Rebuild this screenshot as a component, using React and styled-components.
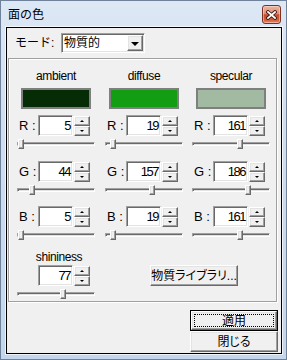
import React from "react";
import styled, { createGlobalStyle } from "styled-components";

const FONT = `"Liberation Sans", "Noto Sans CJK JP", sans-serif`;

const Global = createGlobalStyle`
  html, body { margin: 0; padding: 0; background: #ffffff; }
  body { font-family: ${FONT}; font-size: 12px; color: #000; }
  * { box-sizing: border-box; }
`;

const Window = styled.div`
  width: 287px;
  height: 360px;
  border: 1px solid #6f8299;
  background: linear-gradient(to bottom, #dde8f5 0%, #d0def0 30%, #c3d6ec 100%);
  padding: 0 4px 5px 5px;
  display: flex;
  flex-direction: column;
`;

const TitleBar = styled.div`
  height: 26px;
  flex: none;
  display: flex;
  align-items: flex-start;
  justify-content: space-between;
  padding-left: 2px;
`;

const Title = styled.div`
  margin-top: 6px;
  line-height: 14px;
  font-size: 12px;
  font-family: "Noto Sans CJK JP", sans-serif;
  color: #000;
`;

const CloseButton = styled.div`
  width: 19px;
  height: 19px;
  margin: 4px 1px 0 0;
  border: 1px solid #7b3324;
  border-radius: 3px;
  background: linear-gradient(to bottom, #ecb7a6 0%, #de8c73 45%, #c8492c 52%, #cf5a37 80%, #e0876a 100%);
  box-shadow: inset 0 0 0 1px rgba(255, 235, 225, 0.45);
  display: flex;
  align-items: center;
  justify-content: center;
`;

const Client = styled.div`
  flex: none;
  width: 276px;
  height: 327px;
  border: 1px solid #000;
  box-shadow: 0 0 0 1px rgba(255, 255, 255, 0.7);
  background: #f0f0f0;
  display: flex;
  flex-direction: column;
  align-items: flex-start;
  padding-top: 5px;
`;

const ModeRow = styled.div`
  display: flex;
  align-items: center;
  padding-left: 8px;
  height: 20px;
`;

const ModeLabel = styled.div`
  width: 46px;
  line-height: 14px;
`;

const sunken = `
  border: 1px solid;
  border-color: #a0a0a0 #ffffff #ffffff #a0a0a0;
  box-shadow: inset 1px 1px 0 #696969, inset -1px -1px 0 #e3e3e3;
`;

const raised = `
  border: 1px solid;
  border-color: #ffffff #696969 #696969 #ffffff;
  box-shadow: inset -1px -1px 0 #a0a0a0, inset 1px 1px 0 #e3e3e3;
  background: #f0f0f0;
`;

const Select = styled.div`
  width: 84px;
  height: 20px;
  ${sunken}
  background: #fff;
  display: flex;
  align-items: center;
  padding: 0 1px 0 2px;
`;

const SelectText = styled.div`
  flex: 1;
  line-height: 14px;
`;

const DropButton = styled.div`
  width: 16px;
  height: 16px;
  ${raised}
  display: flex;
  align-items: center;
  justify-content: center;
`;

const DownArrow = styled.div`
  width: 0;
  height: 0;
  border-left: 4px solid transparent;
  border-right: 4px solid transparent;
  border-top: 4px solid #000;
  margin-top: 1px;
`;

const GroupBox = styled.div`
  margin: 5px 0 0 1px;
  width: 269px;
  height: 244px;
  border: 1px solid #a0a0a0;
  box-shadow: inset 1px 1px 0 #fff, 1px 1px 0 #fff;
  padding: 10px 0 0 3px;
  display: flex;
  flex-direction: column;
`;

const Columns = styled.div`
  display: grid;
  grid-template-columns: 88px 87px 88px;
`;

const Column = styled.div`
  display: flex;
  flex-direction: column;
  align-items: flex-start;
`;

const ColumnTitle = styled.div`
  width: 88px;
  text-align: center;
  line-height: 14px;
  height: 14px;
  letter-spacing: -0.4px;
  padding-left: ${(p) => p.$shift || 0}px;
`;

const Swatch = styled.div`
  margin: 5px 0 0 9px;
  width: 70px;
  height: 21px;
  border: 2px solid #7f7f7f;
  background: ${(p) => p.$color};
`;

const Channel = styled.div`
  margin-top: ${(p) => p.$gap}px;
  display: flex;
  flex-direction: column;
  align-items: flex-start;
`;

const Row = styled.div`
  display: flex;
  align-items: center;
  height: 21px;
`;

const RowLabel = styled.div`
  width: 26px;
  padding-left: 7px;
  font-size: 13px;
  line-height: 14px;
  white-space: pre;
`;

const Edit = styled.div`
  width: 35px;
  height: 21px;
  ${sunken}
  background: #fff;
  display: flex;
  align-items: center;
  justify-content: flex-end;
  padding-right: 2px;
  font-size: 13px;
  letter-spacing: -1.5px;
  line-height: 14px;
`;

const Spin = styled.div`
  width: 17px;
  height: 21px;
  padding: 1px 0 0 1px;
  display: flex;
  flex-direction: column;
`;

const SpinButton = styled.div`
  width: 16px;
  height: 10px;
  ${raised}
  display: flex;
  align-items: center;
  justify-content: center;
`;

const TinyArrow = styled.div`
  width: 0;
  height: 0;
  border-left: 2px solid transparent;
  border-right: 2px solid transparent;
  ${(p) => (p.$up ? "border-bottom: 2px solid #000;" : "border-top: 2px solid #000;")}
`;

const SliderBox = styled.div`
  position: relative;
  width: 78px;
  height: 12px;
  margin: 1px 0 0 5px;
`;

const Track = styled.div`
  margin-top: 5px;
  height: 4px;
  border: 1px solid;
  border-color: #a0a0a0 #ffffff #ffffff #a0a0a0;
  box-shadow: inset 1px 1px 0 #696969;
  background: #e3e3e3;
`;

const Thumb = styled.div`
  position: absolute;
  top: 2px;
  width: 6px;
  height: 10px;
  ${raised}
`;

const ShinyRow = styled.div`
  margin-top: 10px;
  display: flex;
  align-items: flex-start;
`;

const PushButton = styled.div`
  width: 88px;
  height: 21px;
  margin: ${(p) => p.$margin || "0"};
  ${raised}
  display: flex;
  align-items: center;
  justify-content: center;
  line-height: 14px;
  font-feature-settings: "palt";
`;

const DefaultButton = styled.div`
  width: 88px;
  height: 21px;
  border: 1px solid #000;
  display: flex;
  background: #f0f0f0;
`;

const DefaultInner = styled.div`
  flex: 1;
  ${raised}
  display: flex;
  padding: 2px;
`;

const FocusRect = styled.div`
  flex: 1;
  border: 1px dotted #000;
  display: flex;
  align-items: center;
  justify-content: center;
  line-height: 14px;
`;

const ButtonStack = styled.div`
  margin: 8px 0 0 183px;
  display: flex;
  flex-direction: column;
`;

function SpinEdit({ label, value }) {
  return (
    <Row>
      <RowLabel>{label}</RowLabel>
      <Edit>{value}</Edit>
      <Spin>
        <SpinButton>
          <TinyArrow $up />
        </SpinButton>
        <SpinButton>
          <TinyArrow />
        </SpinButton>
      </Spin>
    </Row>
  );
}

function Slider({ value, max }) {
  const left = Math.round((value / max) * 72);
  return (
    <SliderBox>
      <Track />
      <Thumb style={{ left }} />
    </SliderBox>
  );
}

const channels = ["R", "G", "B"];
const gaps = [6, 12, 11];
const materials = [
  { name: "ambient", rgb: [5, 44, 5] },
  { name: "diffuse", rgb: [19, 157, 19] },
  { name: "specular", rgb: [161, 186, 161] },
];

function MaterialColumn({ name, rgb }) {
  return (
    <Column>
      <ColumnTitle>{name}</ColumnTitle>
      <Swatch $color={`rgb(${rgb.join(",")})`} />
      {channels.map((ch, i) => (
        <Channel key={ch} $gap={gaps[i]}>
          <SpinEdit label={`${ch} :`} value={rgb[i]} />
          <Slider value={rgb[i]} max={255} />
        </Channel>
      ))}
    </Column>
  );
}

function CloseGlyph() {
  return (
    <svg width="11" height="10" viewBox="0 0 11 10">
      <path d="M2 2 L9 8 M9 2 L2 8" stroke="#3d1a12" strokeWidth="3.6" strokeLinecap="square" />
      <path d="M2 2 L9 8 M9 2 L2 8" stroke="#ffffff" strokeWidth="1.8" strokeLinecap="square" />
    </svg>
  );
}

export default function App() {
  return (
    <>
      <Global />
      <Window>
        <TitleBar>
          <Title>面の色</Title>
          <CloseButton>
            <CloseGlyph />
          </CloseButton>
        </TitleBar>
        <Client>
          <ModeRow>
            <ModeLabel>モード:</ModeLabel>
            <Select>
              <SelectText>物質的</SelectText>
              <DropButton>
                <DownArrow />
              </DropButton>
            </Select>
          </ModeRow>
          <GroupBox>
            <Columns>
              {materials.map((m) => (
                <MaterialColumn key={m.name} {...m} />
              ))}
            </Columns>
            <ShinyRow>
              <Column>
                <ColumnTitle $shift={6}>shininess</ColumnTitle>
                <Channel $gap={1}>
                  <SpinEdit label="" value={77} />
                  <Slider value={77} max={128} />
                </Channel>
              </Column>
              <PushButton $margin="15px 0 0 50px">物質ライブラリ...</PushButton>
            </ShinyRow>
          </GroupBox>
          <ButtonStack>
            <DefaultButton>
              <DefaultInner>
                <FocusRect>適用</FocusRect>
              </DefaultInner>
            </DefaultButton>
            <PushButton>閉じる</PushButton>
          </ButtonStack>
        </Client>
      </Window>
    </>
  );
}
